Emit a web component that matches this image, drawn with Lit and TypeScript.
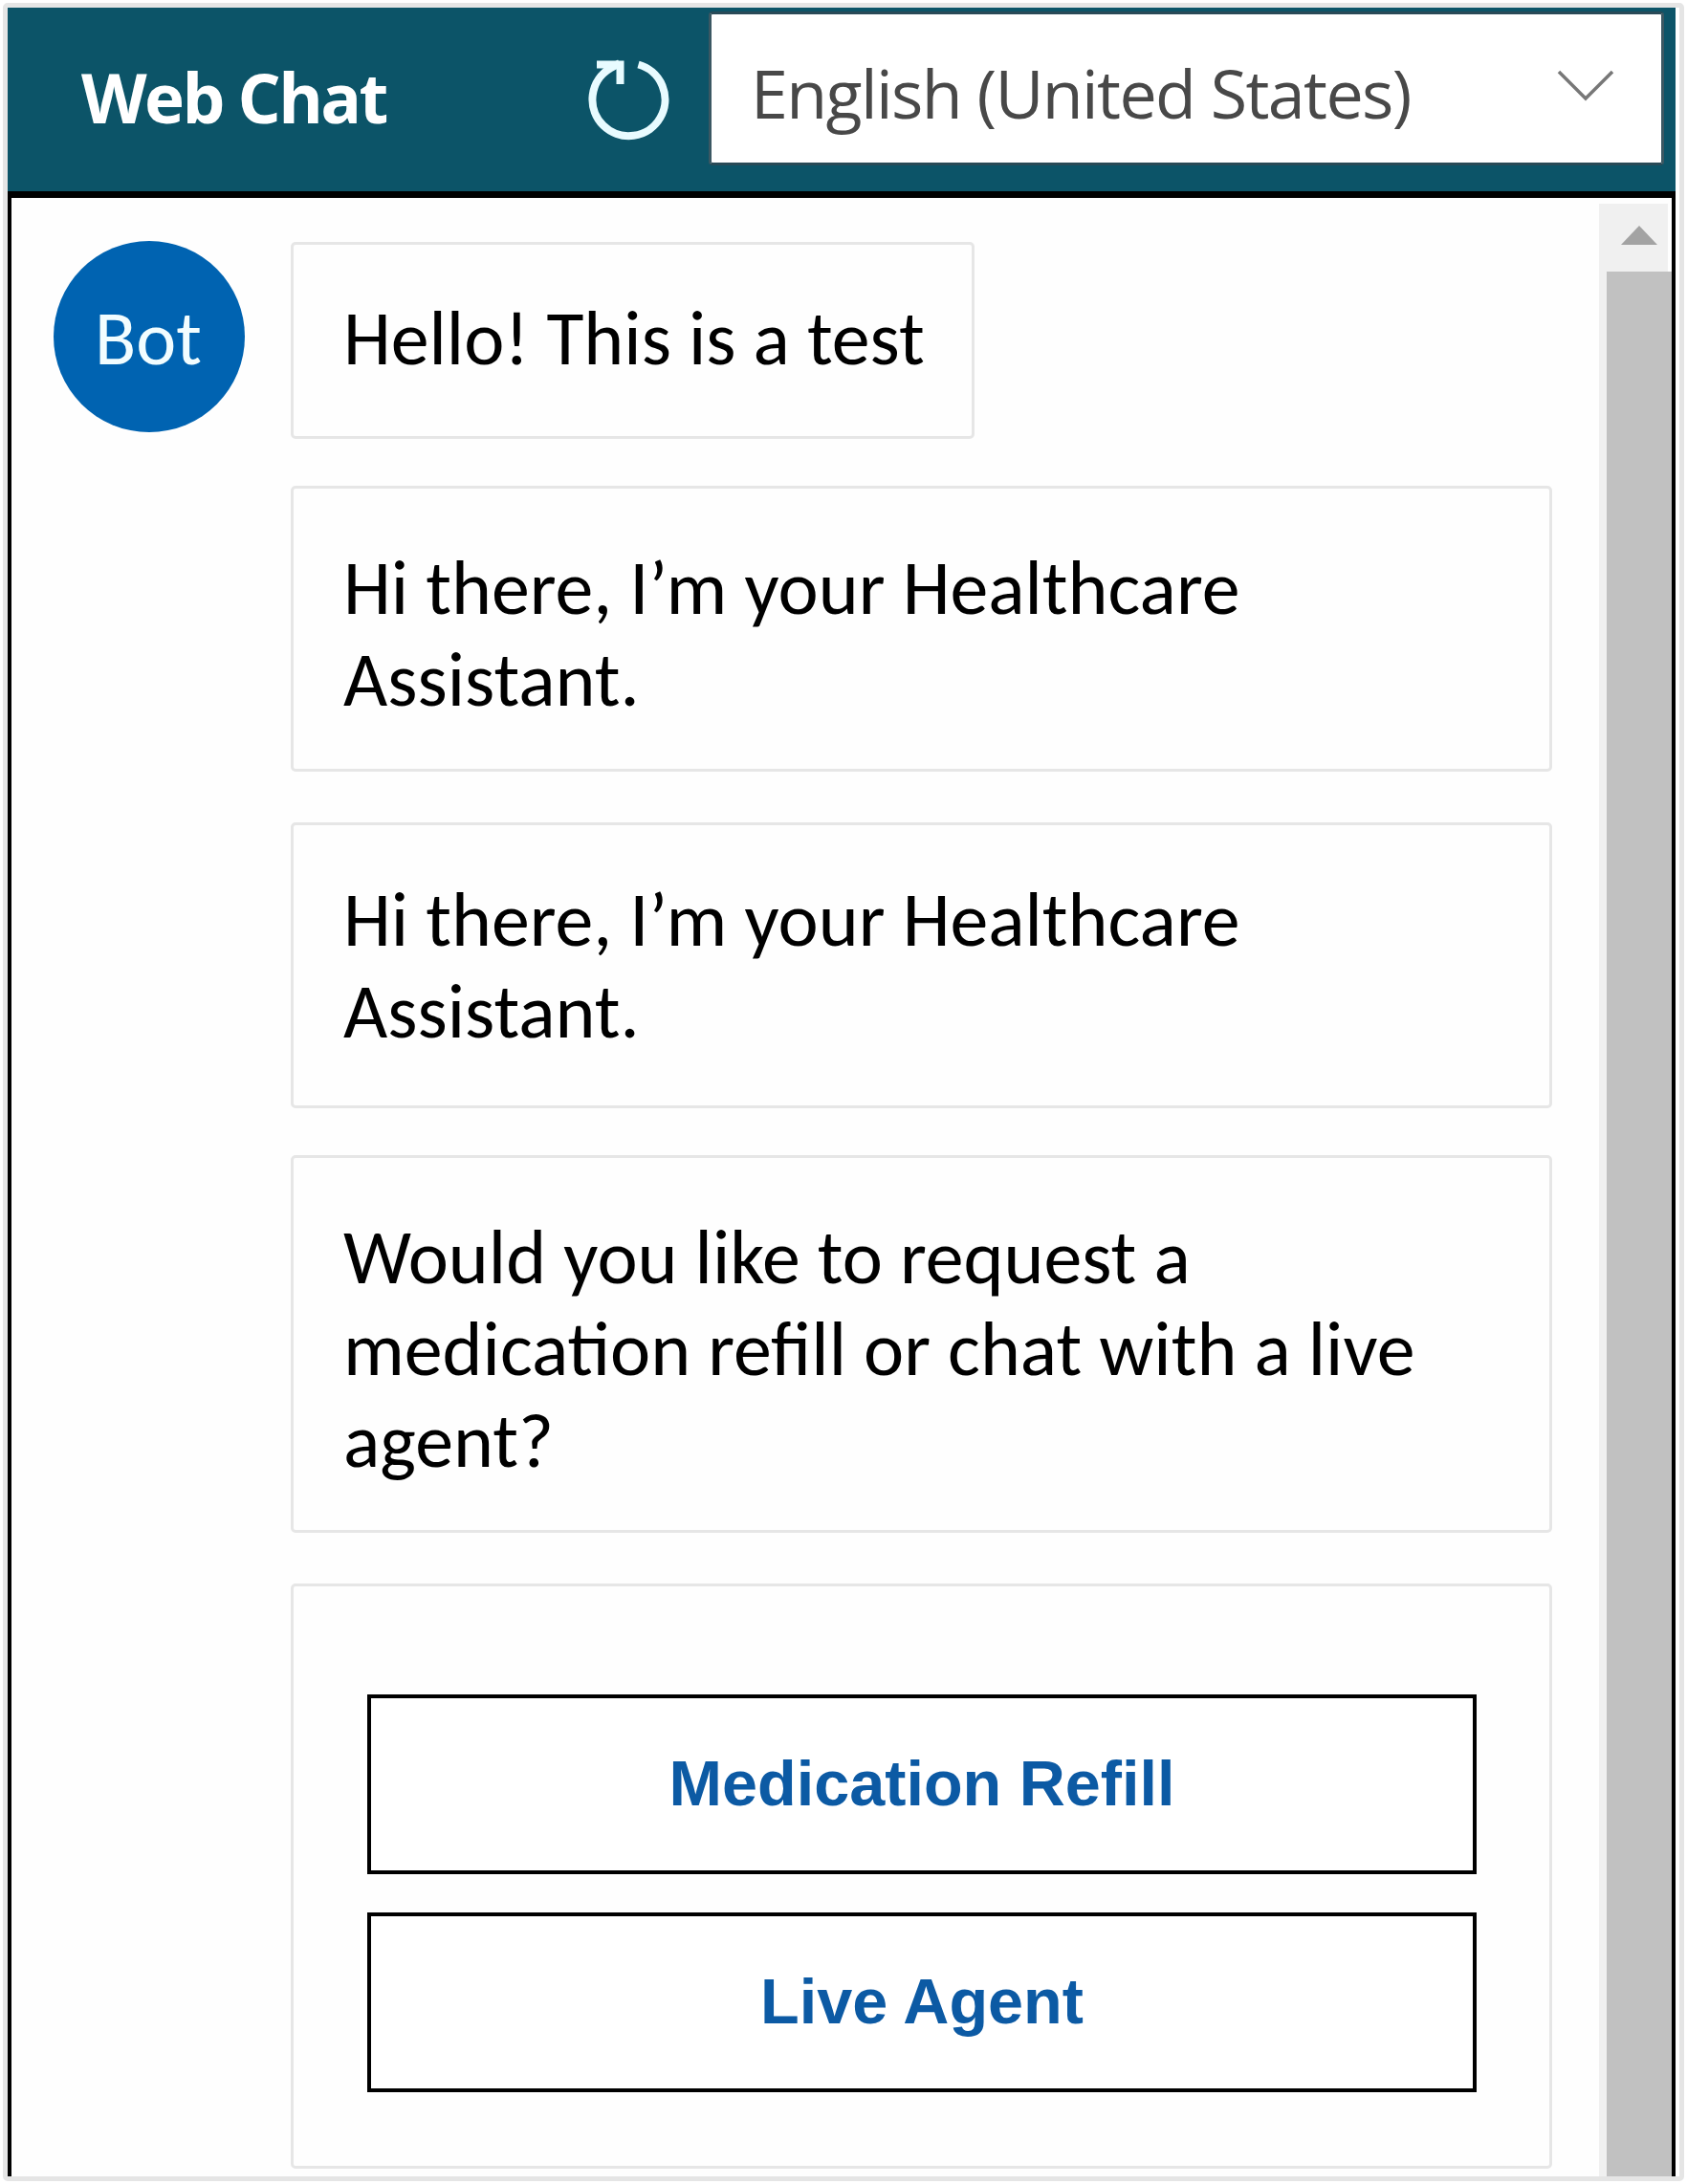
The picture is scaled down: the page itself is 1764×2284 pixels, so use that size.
import { LitElement, html, css } from "lit";
import { customElement, property } from "lit/decorators.js";

@customElement("chat-header")
class ChatHeader extends LitElement {
  static styles = css`
    :host {
      display: flex;
      box-sizing: border-box;
      height: 192px;
      background: #0c5468;
      font-family: "Open Sans", sans-serif;
    }
    .title {
      margin: 0;
      width: 531px;
      padding: 40px 0 0 77px;
      box-sizing: border-box;
      color: #fff;
      font-size: 71px;
      font-weight: 700;
      letter-spacing: -2.6px;
      line-height: 108px;
      white-space: nowrap;
    }
    .restart {
      width: 202px;
      padding: 43px 0 0 75px;
      box-sizing: border-box;
    }
    .restart svg {
      display: block;
    }
    .select {
      display: flex;
      justify-content: space-between;
      box-sizing: border-box;
      width: 999px;
      height: 161px;
      margin-top: 4px;
      padding-right: 48px;
      border: 3px solid #3b5863;
      border-top-color: #294a57;
      border-bottom-color: #294a57;
      border-radius: 4px;
      background: #fff;
    }
    .lang {
      padding: 28px 0 0 41px;
      color: #484848;
      font-size: 70px;
      font-weight: 400;
      letter-spacing: -1.65px;
      line-height: 108px;
      white-space: nowrap;
    }
    .chevron {
      display: block;
      margin-top: 57px;
    }
  `;
  render() {
    return html`
      <h1 class="title">Web Chat</h1>
      <div class="restart">
        <svg width="90" height="96" viewBox="0 0 90 96" fill="none" stroke="#e8fbff" stroke-width="8">
          <path d="M53.5 16.5A38 38 0 1 1 24 20.5L34 15" />
          <path d="M10 16.5H34.5V37" />
        </svg>
      </div>
      <div class="select">
        <span class="lang">English (United States)</span>
        <svg class="chevron" width="62" height="38" viewBox="0 0 62 38" fill="none" stroke="#777" stroke-width="3.5">
          <path d="M3 3L31 31L59 3" />
        </svg>
      </div>
    `;
  }
}

@customElement("chat-scrollbar")
class ChatScrollbar extends LitElement {
  static styles = css`
    :host {
      display: flex;
      flex-direction: column;
      box-sizing: border-box;
      width: 76px;
      padding-top: 6px;
    }
    .up {
      height: 71px;
      width: 72px;
      background: #f0f0f0;
      padding: 22px 0 0 23px;
      box-sizing: border-box;
    }
    .up svg {
      display: block;
    }
    .track {
      flex: 1;
      display: flex;
      padding-left: 8px;
      background: #f0f0f0;
    }
    .thumb {
      flex: 1;
      background: #c1c1c1;
    }
  `;
  render() {
    return html`
      <div class="up">
        <svg width="38" height="22" viewBox="0 0 38 22"><path d="M0 21L19 1L38 21Z" fill="#a3a3a3" /></svg>
      </div>
      <div class="track"><div class="thumb"></div></div>
    `;
  }
}

@customElement("chat-bubble")
class ChatBubble extends LitElement {
  @property() text = "";
  static styles = css`
    :host {
      display: block;
      box-sizing: border-box;
      border: 3px solid #e6e6e6;
      border-radius: 5px;
      background: #fefefe;
      color: #000;
      font-family: Carlito, Lato, sans-serif;
      font-size: 79.9px;
      line-height: 96px;
    }
    .text {
      margin: 0;
      padding: 0 40px 0 52px;
    }
  `;
  render() {
    return this.text ? html`<p class="text">${this.text}</p>` : html`<slot></slot>`;
  }
}

@customElement("app-root")
class AppRoot extends LitElement {
  static styles = css`
    :host {
      display: block;
      box-sizing: border-box;
      width: 1764px;
      height: 2284px;
      padding: 3px;
      background: #fff;
      overflow: hidden;
    }
    .frame {
      box-sizing: border-box;
      width: 1758px;
      height: 2278px;
      border: 5px solid #e5e5e5;
      border-radius: 5px;
      padding-right: 4px;
      display: flex;
      flex-direction: column;
      overflow: hidden;
    }
    .body {
      flex: 1;
      min-height: 0;
      display: flex;
      border: 4px solid #000;
      border-top-width: 7px;
      border-bottom: 0;
      background: #fefefe;
    }
    .avatar {
      flex: none;
      box-sizing: border-box;
      width: 200px;
      height: 200px;
      margin: 45px 48px 0 44px;
      padding: 2px 2px 0 0;
      border-radius: 50%;
      background: #0063b1;
      color: #f2fdff;
      font: 79.5px/200px Carlito, Lato, sans-serif;
      text-align: center;
    }
    .list {
      flex: 1;
      min-width: 0;
      display: flex;
      flex-direction: column;
      padding-top: 46px;
    }
    .list > * {
      flex: none;
      width: 1319px;
    }
    .list > .hello {
      width: 715px;
      height: 206px;
      padding-top: 50px;
      margin-bottom: 49px;
    }
    .hi {
      height: 299px;
      padding-top: 56px;
      margin-bottom: 53px;
    }
    .hi-again {
      height: 299px;
      padding-top: 51px;
      margin-bottom: 49px;
    }
    .ask {
      height: 395px;
      padding-top: 56px;
      margin-bottom: 53px;
    }
    .actions {
      height: 612px;
      padding: 113px 76px 0 77px;
    }
    .action {
      display: block;
      box-sizing: border-box;
      width: 100%;
      height: 188px;
      margin: 0 0 40px;
      padding: 0 0 2px;
      border: 4px solid #000;
      background: #fff;
      color: #0c5aa4;
      font: 700 66.6px/178px "Liberation Sans", sans-serif;
      text-align: center;
    }
  `;
  render() {
    return html`
      <div class="frame">
        <chat-header></chat-header>
        <div class="body">
          <div class="avatar">Bot</div>
          <div class="list">
            <chat-bubble class="hello" text="Hello! This is a test"></chat-bubble>
            <chat-bubble class="hi" text="Hi there, I’m your Healthcare Assistant."></chat-bubble>
            <chat-bubble class="hi-again" text="Hi there, I’m your Healthcare Assistant."></chat-bubble>
            <chat-bubble
              class="ask"
              text="Would you like to request a medication refill or chat with a live agent?"
            ></chat-bubble>
            <chat-bubble class="actions">
              <button class="action">Medication Refill</button>
              <button class="action">Live Agent</button>
            </chat-bubble>
          </div>
          <chat-scrollbar></chat-scrollbar>
        </div>
      </div>
    `;
  }
}
